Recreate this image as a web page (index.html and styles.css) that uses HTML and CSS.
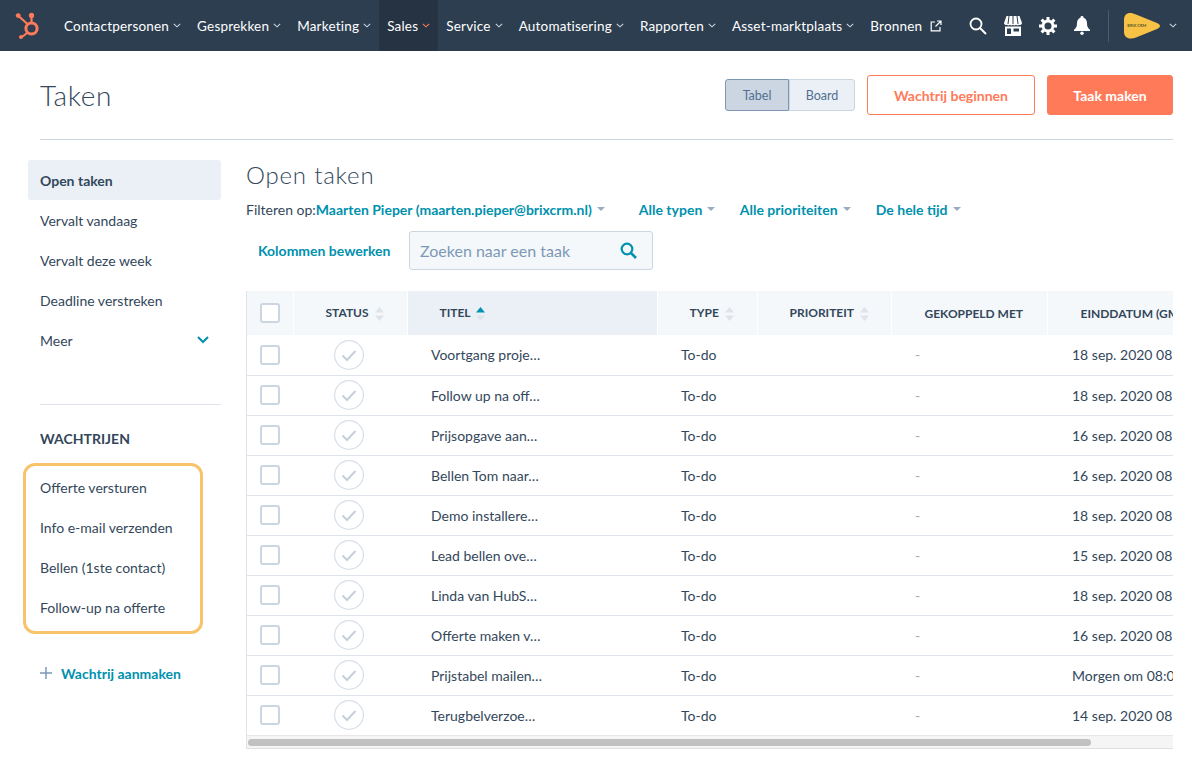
FILE: index.html

```html
<!DOCTYPE html>
<html lang="nl">
<head>
  <meta charset="UTF-8" />
  <meta name="viewport" content="width=device-width, initial-scale=1.0"/>
  <title>Taken</title>
  <link rel="stylesheet" href="styles.css">
</head>
<body>
  <svg class="defs" width="0" height="0" aria-hidden="true">
    <symbol id="chev" viewBox="0 0 8 5"><path d="M.8.8 4 3.8 7.2.8" fill="none" stroke="currentColor" stroke-width="1.1"/></symbol>
    <symbol id="sort" viewBox="0 0 9 14"><path d="M4.5 0 9 5.5H0z" fill="#dfe3eb"/><path d="M4.5 14 9 8.5H0z" fill="#dfe3eb"/></symbol>
    <symbol id="done" viewBox="0 0 30 30"><circle cx="15" cy="15" r="14.4" fill="#fff" stroke="#d6dfe9" stroke-width="1.2"/><path d="M8.5 15.5 13 20l8.5-9" fill="none" stroke="#c5d0db" stroke-width="2"/></symbol>
  </svg>

  <header class="nav">
    <svg class="nav-logo" width="26" height="27" viewBox="0 0 26 27">
      <circle cx="16.5" cy="16.5" r="5.6" fill="none" stroke="#ff7a59" stroke-width="3"/>
      <path d="M3.5 4 13 12.5M16.5 5v6M12 21l-5 4" fill="none" stroke="#ff7a59" stroke-width="2.2"/>
      <circle cx="3.2" cy="3.6" r="2.4" fill="#ff7a59"/>
      <circle cx="16.5" cy="3.4" r="2.6" fill="#ff7a59"/>
      <circle cx="6" cy="25" r="2" fill="#ff7a59"/>
    </svg>
    <ul class="nav-menu">
      <li>Contactpersonen <svg class="chev"><use href="#chev"/></svg></li>
      <li>Gesprekken <svg class="chev"><use href="#chev"/></svg></li>
      <li>Marketing <svg class="chev"><use href="#chev"/></svg></li>
      <li class="current">Sales <svg class="chev"><use href="#chev"/></svg></li>
      <li>Service <svg class="chev"><use href="#chev"/></svg></li>
      <li>Automatisering <svg class="chev"><use href="#chev"/></svg></li>
      <li>Rapporten <svg class="chev"><use href="#chev"/></svg></li>
      <li>Asset-marktplaats <svg class="chev"><use href="#chev"/></svg></li>
      <li>Bronnen
        <svg class="ext" width="12" height="12" viewBox="0 0 12 12"><path d="M5 2H1.2v8.8H10V7M7 1h4v4M11 1 5.5 6.5" fill="none" stroke="#fff" stroke-width="1.2"/></svg>
      </li>
    </ul>
    <div class="nav-tools">
      <svg width="18" height="18" viewBox="0 0 18 18"><circle cx="7" cy="7" r="5.5" fill="none" stroke="#fff" stroke-width="1.8"/><path d="m11 11 6 6" stroke="#fff" stroke-width="2"/></svg>
      <svg width="18" height="20" viewBox="0 0 18 20"><path d="M2.500 0h13L18 7a2.200 2.200 0 0 1-3 1.800 2.400 2.400 0 0 1-3 0 2.400 2.400 0 0 1-3 0 2.400 2.400 0 0 1-3 0 2.400 2.400 0 0 1-3 0A2.200 2.200 0 0 1 0 7z" fill="#fff"/><path d="M5 0 4 8M9 0v8M13 0l1 8" stroke="#2d3e50" stroke-width="1"/><path d="M1 10.500h16V20H1zM3 12.500v5.500h4v-5.500zM9.500 12.500v3h5.500v-3z" fill="#fff" fill-rule="evenodd"/></svg>
      <svg width="18" height="18" viewBox="0 0 18 18"><circle cx="9" cy="9" r="5" fill="none" stroke="#fff" stroke-width="3"/><path d="M9 0v3.500M9 14.500V18M0 9h3.500M14.500 9H18M2.600 2.600l2.500 2.500M12.900 12.900l2.500 2.500M2.600 15.400l2.500-2.500M12.900 5.100l2.500-2.500" stroke="#fff" stroke-width="3"/></svg>
      <svg width="16" height="19" viewBox="0 0 16 19"><path d="M8 0a1.500 1.500 0 0 1 1.500 1.700C12 2.500 13 4.700 13 7.500c0 3 .8 4.500 3 6.200V15H0v-1.300c2.200-1.700 3-3.200 3-6.200 0-2.800 1-5 3.500-5.800A1.500 1.500 0 0 1 8 0z" fill="#fff"/><circle cx="8" cy="17.300" r="1.700" fill="#fff"/></svg>
    </div>
    <div class="nav-account">
      <div class="avatar">
        <svg width="36" height="26" viewBox="0 0 36 26"><path d="M6 0c2 0 4 .6 6 1.500L33 10c4 1.700 4 4.300 0 6L12 24.500C6 27 0 25 0 19V7C0 2.500 2.500 0 6 0z" fill="#f7c245"/></svg>
        <span class="avatar-name">BRIX CRM</span>
      </div>
      <svg class="chev"><use href="#chev"/></svg>
    </div>
  </header>

  <div class="page">
    <div class="page-head">
      <h1>Taken</h1>
      <div class="toggle">
        <span class="toggle-btn on">Tabel</span>
        <span class="toggle-btn">Board</span>
      </div>
      <button class="btn btn-line">Wachtrij beginnen</button>
      <button class="btn btn-fill">Taak maken</button>
    </div>

    <div class="columns">
      <aside class="side">
        <a class="side-item active">Open taken</a>
        <a class="side-item">Vervalt vandaag</a>
        <a class="side-item">Vervalt deze week</a>
        <a class="side-item">Deadline verstreken</a>
        <a class="side-item more">Meer
          <svg width="12" height="8" viewBox="0 0 12 8"><path d="m1 1 5 5 5-5" fill="none" stroke="#0091ae" stroke-width="2"/></svg>
        </a>
        <hr class="side-line">
        <h3>WACHTRIJEN</h3>
        <div class="queues">
          <a class="queue">Offerte versturen</a>
          <a class="queue">Info e-mail verzenden</a>
          <a class="queue">Bellen (1ste contact)</a>
          <a class="queue">Follow-up na offerte</a>
        </div>
        <a class="add-queue">
          <svg width="12" height="12" viewBox="0 0 12 12"><path d="M6 0v12M0 6h12" stroke="#7c98b6" stroke-width="1.500"/></svg>
          Wachtrij aanmaken
        </a>
      </aside>

      <main class="main">
        <h2>Open taken</h2>
        <div class="filters">
          <span class="filter-label">Filteren op:</span>
          <a class="filter f-owner">Maarten Pieper (maarten.pieper@brixcrm.nl) <i class="caret"></i></a>
          <a class="filter f-type">Alle typen <i class="caret"></i></a>
          <a class="filter f-prio">Alle prioriteiten <i class="caret"></i></a>
          <a class="filter">De hele tijd <i class="caret"></i></a>
        </div>
        <div class="tools">
          <a class="edit-cols">Kolommen bewerken</a>
          <div class="search">
            <span>Zoeken naar een taak</span>
            <svg width="17" height="17" viewBox="0 0 17 17"><circle cx="7" cy="7" r="5.300" fill="none" stroke="#0091ae" stroke-width="2.200"/><path d="m11 11 5 5" stroke="#0091ae" stroke-width="2.600"/></svg>
          </div>
        </div>

        <div class="table-box">
          <table>
            <colgroup>
              <col class="c-check"><col class="c-status"><col class="c-title"><col class="c-type"><col class="c-prio"><col class="c-link"><col class="c-date">
            </colgroup>
            <thead>
              <tr>
                <th class="pad-check"><span class="box"></span></th>
                <th class="pad-status">STATUS <svg class="sort"><use href="#sort"/></svg></th>
                <th class="sorted">TITEL <svg class="sort" viewBox="0 0 9 14"><path d="M4.500 0 9 5.500H0z" fill="#0091ae"/><path d="M4.500 14 9 8.500H0z" fill="#dfe3eb"/></svg></th>
                <th class="pad-type">TYPE <svg class="sort"><use href="#sort"/></svg></th>
                <th class="pad-prio">PRIORITEIT <svg class="sort"><use href="#sort"/></svg></th>
                <th class="pad-link">GEKOPPELD MET</th>
                <th class="pad-date">EINDDATUM (GMT+2)</th>
              </tr>
            </thead>
            <tbody>
              <tr><td class="pad-check"><span class="box"></span></td><td class="cell-done"><svg class="done"><use href="#done"/></svg></td><td class="pad-title">Voortgang proje…</td><td class="pad-todo">To-do</td><td></td><td class="dash">-</td><td class="pad-due">18 sep. 2020 08:00</td></tr>
              <tr><td class="pad-check"><span class="box"></span></td><td class="cell-done"><svg class="done"><use href="#done"/></svg></td><td class="pad-title">Follow up na off…</td><td class="pad-todo">To-do</td><td></td><td class="dash">-</td><td class="pad-due">18 sep. 2020 08:00</td></tr>
              <tr><td class="pad-check"><span class="box"></span></td><td class="cell-done"><svg class="done"><use href="#done"/></svg></td><td class="pad-title">Prijsopgave aan…</td><td class="pad-todo">To-do</td><td></td><td class="dash">-</td><td class="pad-due">16 sep. 2020 08:00</td></tr>
              <tr><td class="pad-check"><span class="box"></span></td><td class="cell-done"><svg class="done"><use href="#done"/></svg></td><td class="pad-title">Bellen Tom naar…</td><td class="pad-todo">To-do</td><td></td><td class="dash">-</td><td class="pad-due">16 sep. 2020 08:00</td></tr>
              <tr><td class="pad-check"><span class="box"></span></td><td class="cell-done"><svg class="done"><use href="#done"/></svg></td><td class="pad-title">Demo installere…</td><td class="pad-todo">To-do</td><td></td><td class="dash">-</td><td class="pad-due">18 sep. 2020 08:00</td></tr>
              <tr><td class="pad-check"><span class="box"></span></td><td class="cell-done"><svg class="done"><use href="#done"/></svg></td><td class="pad-title">Lead bellen ove…</td><td class="pad-todo">To-do</td><td></td><td class="dash">-</td><td class="pad-due">15 sep. 2020 08:00</td></tr>
              <tr><td class="pad-check"><span class="box"></span></td><td class="cell-done"><svg class="done"><use href="#done"/></svg></td><td class="pad-title">Linda van HubS…</td><td class="pad-todo">To-do</td><td></td><td class="dash">-</td><td class="pad-due">18 sep. 2020 08:00</td></tr>
              <tr><td class="pad-check"><span class="box"></span></td><td class="cell-done"><svg class="done"><use href="#done"/></svg></td><td class="pad-title">Offerte maken v…</td><td class="pad-todo">To-do</td><td></td><td class="dash">-</td><td class="pad-due">16 sep. 2020 08:00</td></tr>
              <tr><td class="pad-check"><span class="box"></span></td><td class="cell-done"><svg class="done"><use href="#done"/></svg></td><td class="pad-title">Prijstabel mailen…</td><td class="pad-todo">To-do</td><td></td><td class="dash">-</td><td class="pad-due">Morgen om 08:00</td></tr>
              <tr><td class="pad-check"><span class="box"></span></td><td class="cell-done"><svg class="done"><use href="#done"/></svg></td><td class="pad-title">Terugbelverzoe…</td><td class="pad-todo">To-do</td><td></td><td class="dash">-</td><td class="pad-due">14 sep. 2020 08:00</td></tr>
            </tbody>
          </table>
          <div class="scrollbar"><div class="thumb"></div></div>
        </div>
      </main>
    </div>
  </div>
</body>
</html>
```

FILE: styles.css

```css
* {
  margin: 0; padding: 0; box-sizing: border-box;
  font-family: 'Lato', 'Open Sans', sans-serif;
}
body {
  background: #fff;
  color: #33475b;
  font-size: 14px;
  overflow: hidden;
}
.defs { position: absolute; }
a { color: inherit; }

/* top bar */
.nav {
  display: flex;
  align-items: center;
  height: 51px;
  background: #2d3e50;
  color: #fff;
}
.nav-logo { margin-left: 15px; flex: none; }
.nav-menu {
  display: flex;
  list-style: none;
  height: 100%;
  margin-left: 15px;
}
.nav-menu li {
  display: flex;
  align-items: center;
  gap: 4px;
  padding: 0 8px;
  font-size: 13.5px;
  letter-spacing: .2px;
  white-space: nowrap;
}
.nav-menu li.current { background: #253342; }
.nav-menu li.current .chev { color: #ff7a59; }
.chev { width: 8px; height: 5px; color: #cbd6e2; }
.ext { margin-left: 4px; }
.nav-tools {
  display: flex;
  align-items: center;
  gap: 17px;
  margin-left: 19px;
}
.nav-account {
  display: flex;
  align-items: center;
  margin-left: 18px;
  padding-left: 15px;
  height: 32px;
  border-left: 1px solid #4b5c6e;
}
.avatar { position: relative; width: 36px; height: 26px; }
.avatar-name {
  position: absolute;
  left: 3px; top: 10px;
  font-size: 4px;
  font-weight: bold;
  color: #5b5a2a;
  white-space: nowrap;
}
.nav-account .chev { margin-left: 9px; }

/* page head */
.page-head {
  display: flex;
  align-items: center;
  height: 89px;
  margin: 0 19px 0 40px;
  border-bottom: 1px solid #cbd6e2;
}
h1 {
  font-size: 28px;
  font-weight: 300;
  letter-spacing: .6px;
  margin-right: auto;
}
.toggle { display: flex; margin-right: 12px; }
.toggle-btn {
  display: flex;
  align-items: center;
  justify-content: center;
  width: 66px;
  height: 32px;
  font-size: 12.5px;
  color: #516f90;
  background: #eaf0f6;
  border: 1px solid #cbd6e2;
  border-radius: 0 3px 3px 0;
}
.toggle-btn.on {
  width: 64px;
  background: #cbd6e2;
  border-color: #7c98b6;
  border-radius: 3px 0 0 3px;
}
.btn {
  height: 40px;
  font-size: 14px;
  font-weight: bold;
  border-radius: 3px;
  border: 1px solid #ff7a59;
}
.btn-line { width: 168px; background: #fff; color: #ff7a59; margin-right: 12px; }
.btn-fill { width: 126px; background: #ff7a59; color: #fff; }

/* sidebar */
.columns { display: flex; }
.side {
  flex: none;
  width: 193px;
  margin: 20px 25px 0 28px;
}
.side-item {
  display: flex;
  align-items: center;
  height: 40px;
  padding: 0 12px;
  font-size: 14px;
}
.side-item.active {
  background: #eaf0f6;
  font-weight: bold;
  border-radius: 3px;
}
.side-item.more { justify-content: space-between; }
.side-line {
  border: 0;
  border-top: 1px solid #dfe3eb;
  margin: 44px 0 0 12px;
}
h3 {
  font-size: 14px;
  margin: 25px 0 0 12px;
  line-height: 17px;
}
.queues {
  width: 180px;
  height: 171px;
  margin: 16px 0 0 -5px;
  padding-top: 1px;
  border: 3px solid #f7c46c;
  border-radius: 12px;
}
.queue {
  display: flex;
  align-items: center;
  height: 40px;
  padding-left: 14px;
  font-size: 14px;
}
.add-queue {
  display: flex;
  align-items: center;
  gap: 9px;
  margin: 29px 0 0 12px;
  height: 20px;
  color: #0091ae;
  font-weight: bold;
}

/* main */
.main { width: 927px; flex: none; }
h2 {
  font-size: 24px;
  font-weight: 300;
  letter-spacing: .8px;
  line-height: 30px;
  margin-top: 20px;
}
.filters {
  display: flex;
  align-items: center;
  height: 20px;
  margin-top: 9px;
}
.filter {
  color: #0091ae;
  font-weight: bold;
  white-space: nowrap;
  display: flex;
  align-items: center;
  gap: 5px;
}
.filter-label { white-space: nowrap; }
.f-owner { width: 323px; }
.f-type { width: 101px; }
.f-prio { width: 136px; }
.caret {
  width: 0; height: 0;
  border: 4px solid transparent;
  border-top: 4px solid #99acc2;
  border-bottom: 0;
}
.tools {
  display: flex;
  align-items: center;
  margin-top: 12px;
  height: 39px;
}
.edit-cols {
  width: 163px;
  padding-left: 12px;
  color: #0091ae;
  font-weight: bold;
  white-space: nowrap;
}
.search {
  display: flex;
  align-items: center;
  justify-content: space-between;
  width: 244px;
  height: 39px;
  padding: 0 15px 0 10px;
  background: #f5f8fa;
  border: 1px solid #cbd6e2;
  border-radius: 3px;
  font-size: 16px;
  color: #7c98b6;
}

/* table */
.table-box {
  margin-top: 21px;
  border-left: 1px solid #dfe3eb;
  overflow: hidden;
}
table {
  width: 940px;
  table-layout: fixed;
  border-collapse: collapse;
}
.c-check { width: 46px; }
.c-status { width: 114px; }
.c-title { width: 250px; }
.c-type { width: 100px; }
.c-prio { width: 134px; }
.c-link { width: 156px; }
.c-date { width: 140px; }
th {
  height: 44px;
  text-align: left;
  font-size: 12px;
  font-weight: bold;
  background: #f5f8fa;
  white-space: nowrap;
  border-right: 1px solid #fff;
  overflow: hidden;
}
th.sorted { background: #eaf0f6; padding-left: 32px; }
td {
  height: 40px;
  border-top: 1px solid #dfe3eb;
  font-size: 14px;
  white-space: nowrap;
  overflow: hidden;
}
tbody tr:first-child td { border-top: 0; }
.pad-check { padding-left: 13px; }
.pad-status { padding-left: 32px; }
.pad-type { padding-left: 32px; }
.pad-prio { padding-left: 32px; }
.pad-link { padding-left: 33px; }
.pad-date { padding-left: 33px; }
.pad-title { padding-left: 24px; }
.pad-todo { padding-left: 24px; }
.pad-due { padding-left: 25px; }
.dash { padding-left: 24px; color: #99acc2; }
.cell-done { padding-left: 41px; }
.box {
  display: block;
  width: 20px;
  height: 20px;
  background: #fff;
  border: 2px solid #cbd6e2;
  border-radius: 3px;
}
.done { display: block; width: 30px; height: 30px; }
.sort { width: 9px; height: 14px; margin-left: 3px; vertical-align: middle; }
.scrollbar {
  height: 14px;
  padding: 3px 82px 3px 1px;
  background: #f5f5f5;
  border-top: 1px solid #e8e8e8;
  border-bottom: 1px solid #e0e0e0;
}
.thumb {
  height: 7px;
  background: #c1c1c1;
  border-radius: 4px;
}
```
